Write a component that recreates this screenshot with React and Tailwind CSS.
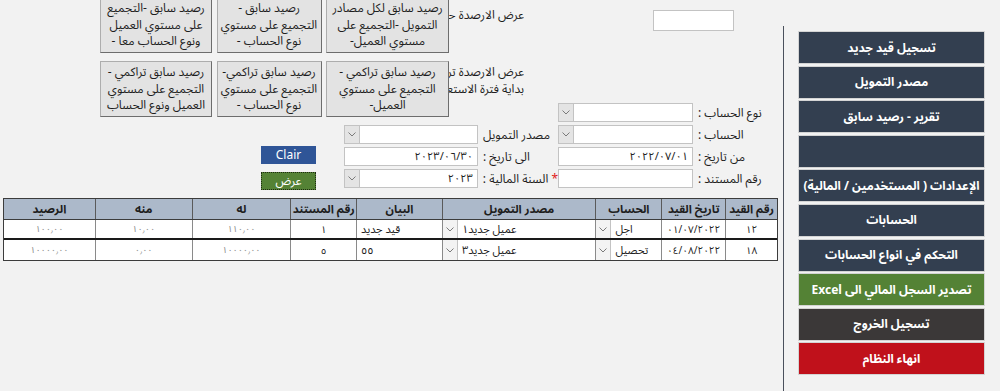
import React from "react";

const font = "font-['Noto_Sans','Noto_Sans_Arabic','DejaVu_Sans',sans-serif]";

const Chevron = () => (
  <svg width="8" height="5" viewBox="0 0 8 5">
    <path d="M0.5 0.5 L4 4 L7.5 0.5" fill="none" stroke="#7a7a7a" strokeWidth="1" />
  </svg>
);

// grey windows-style button with 3 lines of text
function OldButton({ lines }) {
  return (
    <div
      dir="rtl"
      className="h-[56px] w-full flex flex-col items-center justify-center bg-[#e3e3e3] border border-[#adadad] border-r-[#6d6d6d] border-b-[#6d6d6d] text-[12px] leading-[16.5px] text-[#1e1e1e]"
    >
      {lines.map((l, i) => (
        <span key={i} className="whitespace-nowrap">
          {l}
        </span>
      ))}
    </div>
  );
}

function Combo({ w, text }) {
  return (
    <div className={`flex h-[19px] ${w} border border-[#c3c3c3] bg-white`}>
      <div className="w-[15px] bg-[#e4e4e4] border-r border-[#c3c3c3] flex items-center justify-center">
        <Chevron />
      </div>
      <div dir="ltr" className="flex-1 flex items-center justify-end px-[4px] text-[11px] text-[#222]">
        {text}
      </div>
    </div>
  );
}

function Field({ w, text }) {
  return (
    <div
      dir="ltr"
      className={`flex items-center justify-end h-[19px] ${w} border border-[#c3c3c3] bg-white px-[4px] text-[11px] text-[#222]`}
    >
      {text}
    </div>
  );
}

function Label({ children, star }) {
  return (
    <span dir="rtl" className="ml-[5px] whitespace-nowrap text-[12px] text-[#1e1e1e]">
      {star && <span className="text-[#e01b1b]">* </span>}
      {children}
    </span>
  );
}

const sideButtons = [
  { t: "تسجيل قيد جديد", c: "bg-[#333f50]" },
  { t: "مصدر التمويل", c: "bg-[#333f50]" },
  { t: "تقرير - رصيد سابق", c: "bg-[#333f50]" },
  { t: "", c: "bg-[#333f50]" },
  { t: "الإعدادات ( المستخدمين / المالية)", c: "bg-[#333f50]" },
  { t: "الحسابات", c: "bg-[#333f50]" },
  { t: "التحكم في انواع الحسابات", c: "bg-[#333f50]" },
  { t: "تصدير السجل المالي الى Excel", c: "bg-[#548235]" },
  { t: "تسجيل الخروج", c: "bg-[#3b3838]" },
  { t: "انهاء النظام", c: "bg-[#c0111b]" },
];

const cols = [
  { h: "الرصيد", w: "w-[92px]" },
  { h: "منه", w: "w-[97px]" },
  { h: "له", w: "w-[99px]" },
  { h: "رقم المستند", w: "w-[66px]" },
  { h: "البيان", w: "w-[86px]" },
  { h: "مصدر التمويل", w: "w-[154px]" },
  { h: "الحساب", w: "w-[66px]" },
  { h: "تاريخ القيد", w: "w-[64px]" },
  { h: "رقم القيد", w: "w-[51px]" },
];

const rows = [
  ["١٠٠٫٠٠", "١٠٫٠٠", "١١٠٫٠٠", "١", "قيد جديد", "عميل جديد١", "اجل", "٠١/٠٧/٢٠٢٢", "١٢"],
  ["١٠٠٠٠٫٠٠", "٠٫٠٠", "١٠٠٠٠٫٠٠", "٥", "٥٥", "عميل جديد٣", "تحصيل", "٠٤/٠٨/٢٠٢٢", "١٨"],
];

function Cell({ i, v }) {
  const w = cols[i].w;
  if (i === 5 || i === 6) {
    return (
      <div className={`${w} h-full flex border-r border-[#8a8a8a] bg-white`}>
        <div className="w-[15px] border-r border-[#c3c3c3] bg-[#f3f3f3] flex items-center justify-center">
          <Chevron />
        </div>
        <div dir="rtl" className="flex-1 flex items-center px-[4px] text-[11px] text-[#222]">
          <span className="mr-auto whitespace-nowrap">{v}</span>
        </div>
      </div>
    );
  }
  if (i === 4) {
    return (
      <div className={`${w} h-full flex items-center border-r border-[#8a8a8a] bg-white px-[4px]`}>
        <span dir="rtl" className="text-[11px] text-[#222] whitespace-nowrap">
          {v}
        </span>
      </div>
    );
  }
  const grey = i < 3;
  return (
    <div
      dir="ltr"
      className={`${w} h-full flex items-center justify-center border-r border-[#8a8a8a] last:border-r-0 bg-white whitespace-nowrap ${
        grey ? "text-[9px] text-[#8a8a8a]" : "text-[10px] text-[#222]"
      }`}
    >
      {v}
    </div>
  );
}

export default function App() {
  return (
    <div className={`w-[1000px] h-[391px] bg-[#f2f2f2] overflow-hidden flex ${font}`}>
      {/* MAIN AREA */}
      <div className="w-[783px] flex flex-col">
        {/* TOP: report buttons + labels */}
        <div className="h-[103px] flex items-start">
          <div className="ml-[100px] mt-[-3px] w-[349px] grid grid-cols-[112px_105px_123px] gap-x-[4.5px] gap-y-[8px]">
            <OldButton lines={["رصيد سابق -التجميع", "على مستوي العميل", "ونوع الحساب معا -"]} />
            <OldButton lines={["رصيد سابق -", "التجميع على مستوي", "نوع الحساب -"]} />
            <OldButton lines={["رصيد سابق لكل مصادر", "التمويل -التجميع على", "مستوي العميل-"]} />
            <OldButton lines={["رصيد سابق تراكمي -", "التجميع على مستوي", "العميل ونوع الحساب"]} />
            <OldButton lines={["رصيد سابق تراكمي-", "التجميع على مستوي", "نوع الحساب -"]} />
            <OldButton lines={["رصيد سابق تراكمي -", "التجميع على مستوي", "العميل-"]} />
          </div>
          <div dir="rtl" className="w-[75px] overflow-hidden flex flex-col text-[12px] leading-[17px] text-[#1e1e1e]">
            <span className="mt-[6px] whitespace-nowrap">عرض الارصدة حسب تاريخ</span>
            <span className="mt-[40px] whitespace-nowrap">عرض الارصدة تراكمية حتى تاريخ</span>
            <span className="whitespace-nowrap">بداية فترة الاستعلام</span>
          </div>
          <div className="ml-[129px] mt-[10px] w-[81px] h-[21px] bg-white border border-[#c3c3c3]" />
        </div>

        {/* FILTER FORM */}
        <div className="flex items-start">
          <div className="ml-[261px] mt-[43px] w-[55px] flex flex-col">
            <div className="h-[18px] bg-[#2f5597] text-white text-[12px] flex items-center justify-center">
              Clair
            </div>
            <div
              dir="rtl"
              className="mt-[8px] h-[18px] bg-[#548235] border border-dotted border-[#1e2a12] text-white text-[12px] flex items-center justify-center"
            >
              عرض
            </div>
          </div>

          <div className="ml-[28px] w-[214px] flex flex-col gap-[3px]">
            <div className="h-[19px]" />
            <div className="flex items-center">
              <Combo w="w-[134px]" text="" />
              <Label>مصدر التمويل</Label>
            </div>
            <div className="flex items-center">
              <Field w="w-[134px]" text="٢٠٢٣/٠٦/٣٠" />
              <Label>الى تاريخ :</Label>
            </div>
            <div className="flex items-center">
              <Combo w="w-[134px]" text="٢٠٢٣" />
              <Label star>السنة المالية :</Label>
            </div>
          </div>

          <div className="w-[225px] flex flex-col gap-[3px]">
            <div className="flex items-center">
              <Combo w="w-[135px]" text="" />
              <Label>نوع الحساب :</Label>
            </div>
            <div className="flex items-center">
              <Combo w="w-[135px]" text="" />
              <Label>الحساب :</Label>
            </div>
            <div className="flex items-center">
              <Field w="w-[135px]" text="٢٠٢٢/٠٧/٠١" />
              <Label>من تاريخ :</Label>
            </div>
            <div className="flex items-center">
              <Field w="w-[135px]" text="" />
              <Label>رقم المستند :</Label>
            </div>
          </div>
        </div>

        {/* RESULTS TABLE */}
        <div className="mt-[8px] ml-[3px] w-[775px] border border-[#3c3c3c]">
          <div className="flex h-[21px] bg-[#acb9ca] border-b border-[#3c3c3c]">
            {cols.map((c, i) => (
              <div
                key={i}
                dir="rtl"
                className={`${c.w} h-full flex items-center justify-center border-r border-[#5a5a5a] last:border-r-0 whitespace-nowrap text-[11.5px] font-bold text-[#1e1e1e]`}
              >
                {c.h}
              </div>
            ))}
          </div>
          {rows.map((r, ri) => (
            <div
              key={ri}
              className={`flex h-[20px] bg-white ${ri === 0 ? "border-b-2 border-[#1a1a1a]" : ""}`}
            >
              {r.map((v, i) => (
                <Cell key={i} i={i} v={v} />
              ))}
            </div>
          ))}
        </div>
      </div>

      {/* DIVIDER */}
      <div className="pt-[26px] h-full">
        <div className="w-px h-full bg-[#4a505c]" />
      </div>

      {/* SIDEBAR */}
      <div className="ml-[14px] pt-[31px] w-[187px] flex flex-col gap-[1.6px]">
        {sideButtons.map((b, i) => (
          <div
            key={i}
            dir="rtl"
            className={`h-[33px] ${b.c} border border-[#d4d4d4] flex items-center justify-center text-white text-[12px] font-bold whitespace-nowrap`}
          >
            {b.t}
          </div>
        ))}
      </div>
    </div>
  );
}
